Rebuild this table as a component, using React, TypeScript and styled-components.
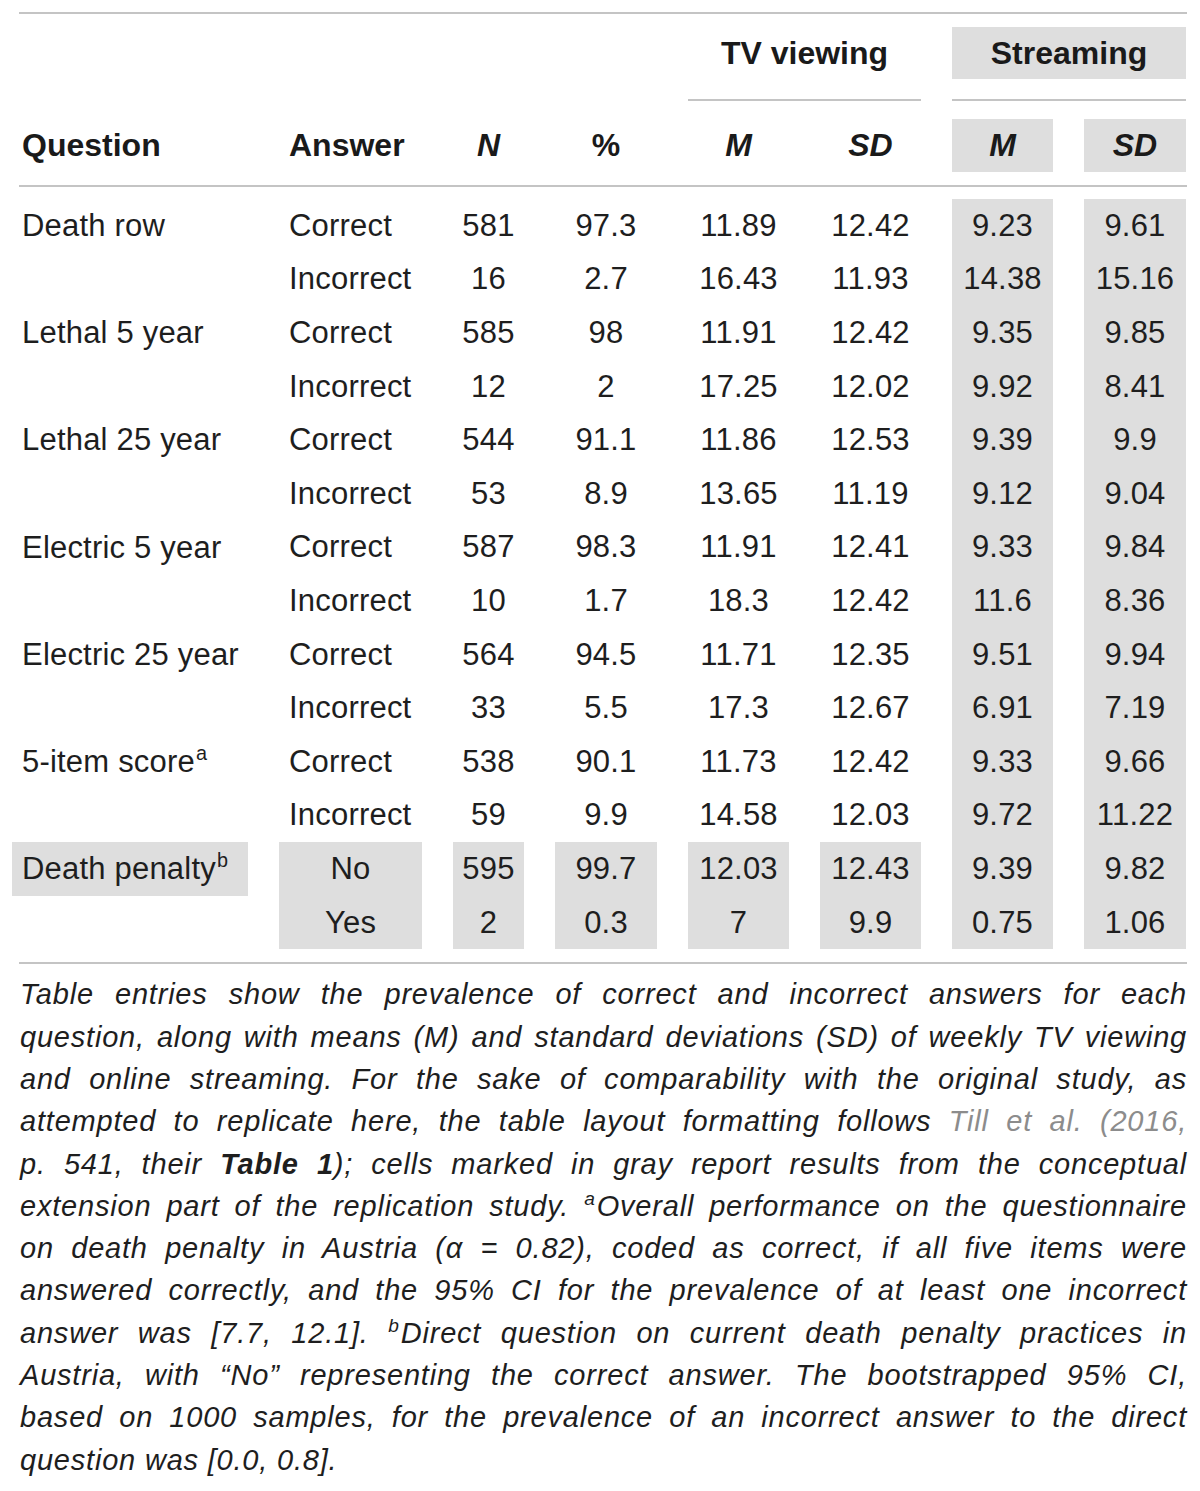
import React from "react";
import styled, { createGlobalStyle, css } from "styled-components";

const GlobalStyle = createGlobalStyle`
  html, body { margin: 0; padding: 0; background: #ffffff; }
  body { font-family: "Liberation Sans", Arial, sans-serif; color: #1e1e1e; }
`;

const COLS = "236px 143px 71px 102px 101px 101px 101px 102px";
const GRAY = "#dedede";
const RULE = "#c4c4c4";

const Page = styled.div`
  width: 1200px;
  box-sizing: border-box;
  padding: 12px 0 0 12px;
`;

const Rule = styled.div<{ $mt: number }>`
  height: 2px;
  width: 1168px;
  margin-left: 7px;
  margin-top: ${(p) => p.$mt}px;
  background: ${RULE};
`;

const Grid = styled.div<{ $mt: number; $h?: number }>`
  display: grid;
  grid-template-columns: ${COLS};
  column-gap: 31px;
  margin-top: ${(p) => p.$mt}px;
  ${(p) => (p.$h !== undefined ? css`height: ${p.$h}px;` : "")}
`;

const BodyGrid = styled(Grid)`
  grid-auto-rows: 53.6px;
`;

const GroupTitle = styled.div<{ $col: string; $gray?: boolean }>`
  grid-column: ${(p) => p.$col};
  display: flex;
  align-items: center;
  justify-content: center;
  font-weight: 700;
  font-size: 32px;
  color: #1a1a1a;
  background: ${(p) => (p.$gray ? GRAY : "transparent")};
`;

const SpanRule = styled.div<{ $col: string }>`
  grid-column: ${(p) => p.$col};
  height: 2px;
  background: ${RULE};
`;

const HeadCell = styled.div<{ $align?: "left" | "center"; $italic?: boolean; $gray?: boolean }>`
  display: flex;
  align-items: center;
  justify-content: ${(p) => (p.$align === "left" ? "flex-start" : "center")};
  padding-left: ${(p) => (p.$align === "left" ? "10px" : "0")};
  font-weight: 700;
  font-size: 32px;
  font-style: ${(p) => (p.$italic ? "italic" : "normal")};
  color: #1a1a1a;
  background: ${(p) => (p.$gray ? GRAY : "transparent")};
`;

const Cell = styled.div<{ $align?: "left" | "center"; $gray?: boolean }>`
  display: flex;
  align-items: center;
  justify-content: ${(p) => (p.$align === "left" ? "flex-start" : "center")};
  padding-left: ${(p) => (p.$align === "left" ? "10px" : "0")};
  font-size: 31px;
  letter-spacing: 0.2px;
  white-space: nowrap;
  color: #1e1e1e;
  background: ${(p) => (p.$gray ? GRAY : "transparent")};
`;

const CellText = styled.span`
  display: inline-block;
  line-height: 1.15;
`;

const Sup = styled.sup`
  font-size: 0.64em;
  line-height: 0;
  vertical-align: 0.6em;
  margin-left: 1px;
`;

const Caption = styled.div`
  width: 1167px;
  margin-left: 8px;
  margin-top: 9px;
  font-size: 29px;
  font-style: italic;
  letter-spacing: 0.8px;
  line-height: 42.3px;
  color: #1e1e1e;
`;

const CaptionLine = styled.div<{ $last?: boolean }>`
  white-space: nowrap;
  text-align: ${(p) => (p.$last ? "left" : "justify")};
  text-align-last: ${(p) => (p.$last ? "left" : "justify")};
`;

const Cite = styled.span`
  color: #8c8c8c;
`;

const Strong = styled.span`
  font-weight: 700;
`;

const CapSup = styled.sup`
  font-size: 0.66em;
  line-height: 0;
  vertical-align: 0.55em;
  margin-right: 1px;
`;

type Row = {
  q: React.ReactNode;
  a: string;
  v: string[];
  dp?: "first" | "second";
};

const rows: Row[] = [
  { q: "Death row", a: "Correct", v: ["581", "97.3", "11.89", "12.42", "9.23", "9.61"] },
  { q: "", a: "Incorrect", v: ["16", "2.7", "16.43", "11.93", "14.38", "15.16"] },
  { q: "Lethal 5 year", a: "Correct", v: ["585", "98", "11.91", "12.42", "9.35", "9.85"] },
  { q: "", a: "Incorrect", v: ["12", "2", "17.25", "12.02", "9.92", "8.41"] },
  { q: "Lethal 25 year", a: "Correct", v: ["544", "91.1", "11.86", "12.53", "9.39", "9.9"] },
  { q: "", a: "Incorrect", v: ["53", "8.9", "13.65", "11.19", "9.12", "9.04"] },
  { q: "Electric 5 year", a: "Correct", v: ["587", "98.3", "11.91", "12.41", "9.33", "9.84"] },
  { q: "", a: "Incorrect", v: ["10", "1.7", "18.3", "12.42", "11.6", "8.36"] },
  { q: "Electric 25 year", a: "Correct", v: ["564", "94.5", "11.71", "12.35", "9.51", "9.94"] },
  { q: "", a: "Incorrect", v: ["33", "5.5", "17.3", "12.67", "6.91", "7.19"] },
  {
    q: (
      <>
        5-item score<Sup>a</Sup>
      </>
    ),
    a: "Correct",
    v: ["538", "90.1", "11.73", "12.42", "9.33", "9.66"],
  },
  { q: "", a: "Incorrect", v: ["59", "9.9", "14.58", "12.03", "9.72", "11.22"] },
  {
    q: (
      <>
        Death penalty<Sup>b</Sup>
      </>
    ),
    a: "No",
    v: ["595", "99.7", "12.03", "12.43", "9.39", "9.82"],
    dp: "first",
  },
  { q: "", a: "Yes", v: ["2", "0.3", "7", "9.9", "0.75", "1.06"], dp: "second" },
];

export default function App() {
  return (
    <>
      <GlobalStyle />
      <Page>
        <Rule $mt={0} />
        <Grid $mt={13} $h={52}>
          <GroupTitle $col="5 / span 2">TV viewing</GroupTitle>
          <GroupTitle $col="7 / span 2" $gray>
            Streaming
          </GroupTitle>
        </Grid>
        <Grid $mt={20}>
          <SpanRule $col="5 / span 2" />
          <SpanRule $col="7 / span 2" />
        </Grid>
        <Grid $mt={18} $h={53}>
          <HeadCell $align="left">Question</HeadCell>
          <HeadCell $align="left">Answer</HeadCell>
          <HeadCell $italic>N</HeadCell>
          <HeadCell>%</HeadCell>
          <HeadCell $italic>M</HeadCell>
          <HeadCell $italic>SD</HeadCell>
          <HeadCell $italic $gray>
            M
          </HeadCell>
          <HeadCell $italic $gray>
            SD
          </HeadCell>
        </Grid>
        <Rule $mt={13} />
        <BodyGrid $mt={12}>
          {rows.map((r, i) => {
            const dp = !!r.dp;
            return (
              <React.Fragment key={i}>
                <Cell $align="left" $gray={r.dp === "first"}>
                  <CellText>{r.q}</CellText>
                </Cell>
                <Cell $align={dp ? "center" : "left"} $gray={dp}>
                  {r.a}
                </Cell>
                {r.v.map((val, j) => (
                  <Cell key={j} $gray={dp || j >= 4}>
                    {val}
                  </Cell>
                ))}
              </React.Fragment>
            );
          })}
        </BodyGrid>
        <Rule $mt={13} />
        <Caption>
          <CaptionLine>Table entries show the prevalence of correct and incorrect answers for each</CaptionLine>
          <CaptionLine>question, along with means (M) and standard deviations (SD) of weekly TV viewing</CaptionLine>
          <CaptionLine>and online streaming. For the sake of comparability with the original study, as</CaptionLine>
          <CaptionLine>
            attempted to replicate here, the table layout formatting follows <Cite>Till et al. (2016,</Cite>
          </CaptionLine>
          <CaptionLine>
            p. 541, their <Strong>Table 1</Strong>); cells marked in gray report results from the conceptual
          </CaptionLine>
          <CaptionLine>
            extension part of the replication study. <CapSup>a</CapSup>Overall performance on the questionnaire
          </CaptionLine>
          <CaptionLine>on death penalty in Austria (α = 0.82), coded as correct, if all five items were</CaptionLine>
          <CaptionLine>answered correctly, and the 95% CI for the prevalence of at least one incorrect</CaptionLine>
          <CaptionLine>
            answer was [7.7, 12.1]. <CapSup>b</CapSup>Direct question on current death penalty practices in
          </CaptionLine>
          <CaptionLine>Austria, with “No” representing the correct answer. The bootstrapped 95% CI,</CaptionLine>
          <CaptionLine>based on 1000 samples, for the prevalence of an incorrect answer to the direct</CaptionLine>
          <CaptionLine $last>question was [0.0, 0.8].</CaptionLine>
        </Caption>
      </Page>
    </>
  );
}
